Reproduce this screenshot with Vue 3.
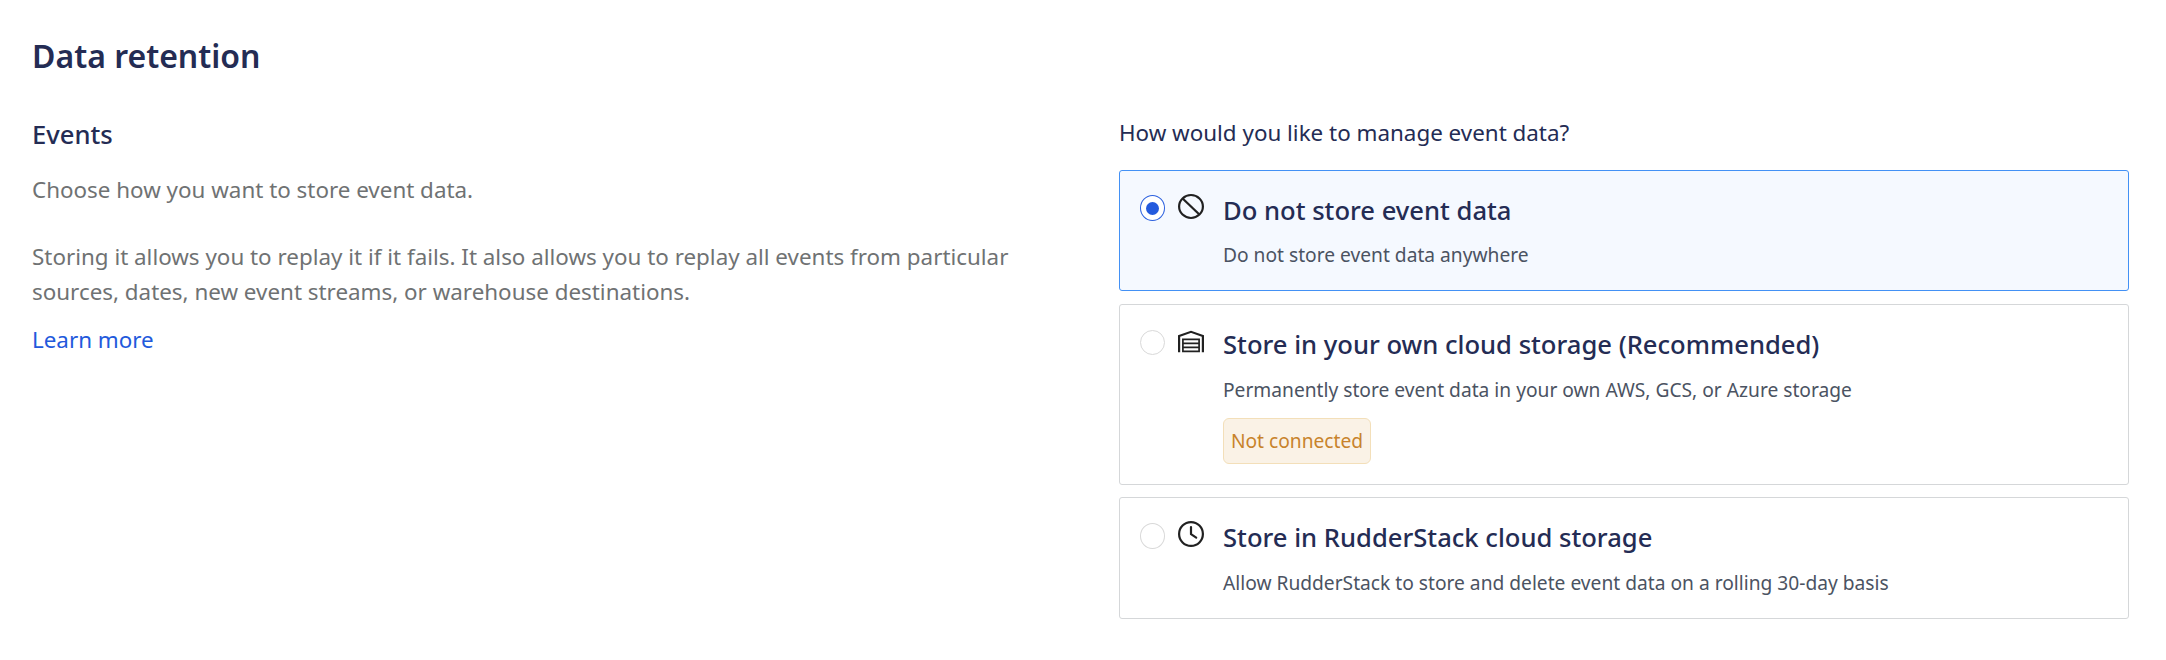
<script setup>
import { ref } from 'vue'

const selected = ref('none')
const options = [
  { id: 'none', icon: 'ban', title: 'Do not store event data', text: 'Do not store event data anywhere' },
  {
    id: 'own',
    icon: 'warehouse',
    title: 'Store in your own cloud storage (Recommended)',
    text: 'Permanently store event data in your own AWS, GCS, or Azure storage',
    badge: 'Not connected',
  },
  {
    id: 'rudder',
    icon: 'clock',
    title: 'Store in RudderStack cloud storage',
    text: 'Allow RudderStack to store and delete event data on a rolling 30-day basis',
  },
]
</script>

<template>
  <main class="page">
    <h1 class="heading">Data retention</h1>
    <div class="columns">
      <section class="info">
        <h2 class="subheading">Events</h2>
        <p class="copy">Choose how you want to store event data.</p>
        <p class="copy details">
          Storing it allows you to replay it if it fails. It also allows you to replay all events from particular
          sources, dates, new event streams, or warehouse destinations.
        </p>
        <a class="link">Learn more</a>
      </section>
      <section class="choices">
        <p class="question">How would you like to manage event data?</p>
        <div
          v-for="o in options"
          :key="o.id"
          class="card"
          :class="[o.id, { active: selected === o.id }]"
          @click="selected = o.id"
        >
          <span class="radio"><span v-if="selected === o.id" class="dot"></span></span>
          <svg v-if="o.icon === 'ban'" class="icon ban" viewBox="0 0 26 26" preserveAspectRatio="none">
            <circle cx="13" cy="13" r="11.9" />
            <path d="M4.6 4.6 21.4 21.4" />
          </svg>
          <svg v-else-if="o.icon === 'warehouse'" class="icon" viewBox="0 0 26 26">
            <path d="M1.1 24.2V8L13 3.8 24.9 8V24.2" />
            <path class="thin" d="M4.9 23.3V11.4H21.1V23.3ZM4.9 15.4H21.1M4.9 19.4H21.1" />
          </svg>
          <svg v-else class="icon" viewBox="0 0 26 26">
            <circle cx="13" cy="13" r="11.9" />
            <path d="M13 6V13.2L18.2 16.6" stroke-linecap="round" stroke-linejoin="round" />
          </svg>
          <div class="body">
            <h3 class="title">{{ o.title }}</h3>
            <p class="text">{{ o.text }}</p>
            <span v-if="o.badge" class="badge">{{ o.badge }}</span>
          </div>
        </div>
      </section>
    </div>
  </main>
</template>

<style>
body {
  margin: 0;
  background: #fff;
}
</style>

<style scoped>
.page {
  box-sizing: border-box;
  width: 2166px;
  height: 660px;
  padding: 31px 37px 0 32px;
  font-family: 'Noto Sans', sans-serif;
  color: #242c54;
}
h1, h2, h3, p {
  margin: 0;
}
.heading {
  font-size: 32px;
  line-height: 50px;
  font-weight: 600;
}
.columns {
  display: grid;
  grid-template-columns: 1010px 1010px;
  column-gap: 77px;
  margin-top: 34px;
}
.subheading {
  font-size: 25.6px;
  line-height: 40px;
  font-weight: 500;
}
.copy {
  margin-top: 17px;
  font-size: 22.4px;
  line-height: 35px;
  color: #6f7273;
}
.details {
  margin-top: 32px;
}
.link {
  display: block;
  margin-top: 13px;
  font-size: 22.4px;
  line-height: 35px;
  color: #2259dc;
}
.question {
  margin-bottom: 19px;
  font-size: 22.4px;
  line-height: 36px;
}
.card {
  box-sizing: border-box;
  display: flex;
  align-items: flex-start;
  height: 121px;
  margin-bottom: 13px;
  padding: 19px 20px;
  border: 1px solid #d5d7d9;
  border-radius: 3px;
}
.card.own {
  height: 181px;
  margin-bottom: 12px;
}
.card.rudder {
  height: 122px;
}
.active {
  background: #f5f9ff;
  border-color: #4391f5;
}
.radio {
  box-sizing: border-box;
  display: grid;
  place-items: center;
  width: 25px;
  height: 26px;
  margin-top: 5px;
  border: 1px solid #d9d9d9;
  border-radius: 50%;
  background: #fff;
}
.own .radio {
  height: 25px;
  margin-top: 6px;
}
.rudder .radio {
  margin-top: 6px;
}
.active .radio {
  border-color: #2b60df;
}
.dot {
  width: 13px;
  height: 13px;
  border-radius: 50%;
  background: #235add;
}
.icon {
  width: 26px;
  height: 26px;
  margin: 4px 0 0 13px;
  fill: none;
  stroke: #212121;
  stroke-width: 2.2;
}
.icon.ban {
  height: 25px;
}
.icon .thin {
  stroke-width: 1.7;
}
.body {
  margin: 1px 0 0 19px;
}
.title {
  font-size: 25.6px;
  line-height: 40px;
  font-weight: 500;
}
.text {
  margin-top: 9px;
  font-size: 19.2px;
  line-height: 30px;
  color: #4b5362;
}
.own .text,
.rudder .text {
  margin-top: 10px;
}
.badge {
  box-sizing: border-box;
  display: block;
  width: 148px;
  height: 46px;
  margin-top: 13px;
  border: 1px solid #f3dfb9;
  border-radius: 6px;
  background: #faf2e6;
  color: #c8832b;
  font-size: 19.2px;
  line-height: 44px;
  text-align: center;
}
</style>
